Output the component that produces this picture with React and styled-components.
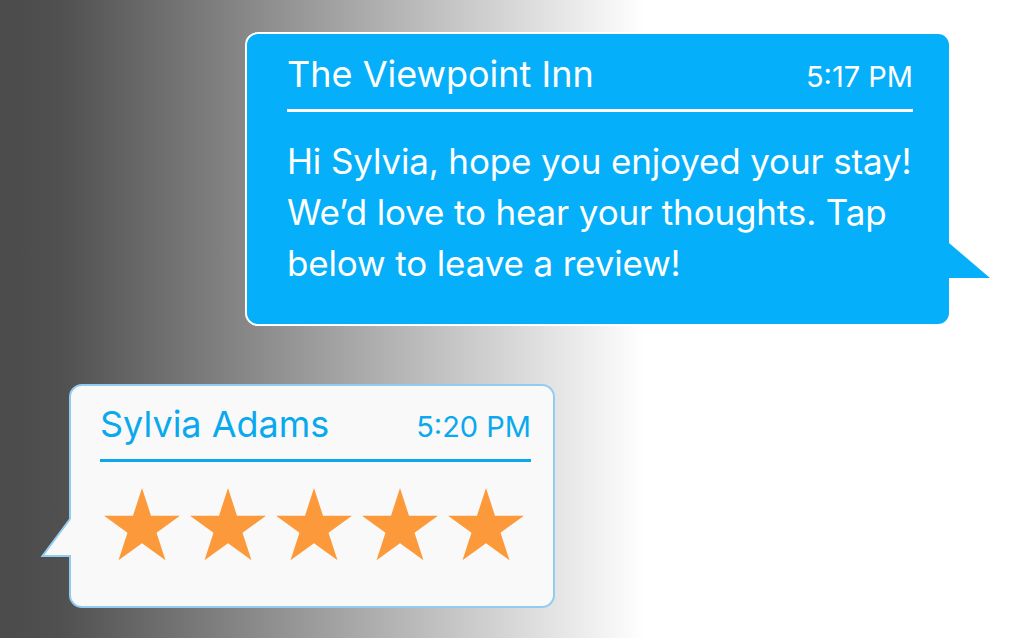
import React from "react";
import styled, { createGlobalStyle } from "styled-components";

const GlobalStyle = createGlobalStyle`
  html, body {
    margin: 0;
    padding: 0;
  }
  body {
    font-family: Inter, "Noto Sans", sans-serif;
    -webkit-font-smoothing: antialiased;
  }
  * { box-sizing: border-box; }
`;

const Page = styled.div`
  width: 1024px;
  height: 638px;
  overflow: hidden;
  background: linear-gradient(90deg, #4b4b4b 0%, #505050 6%, #ffffff 63%);
  display: flex;
  flex-direction: column;
  align-items: flex-start;
  padding-top: 32px;
  gap: 58px;
`;

const Bubble = styled.div`
  position: relative;
  width: ${(p) => p.$width}px;
  margin-left: ${(p) => p.$left}px;
  border: 2px solid ${(p) => p.$border};
  border-radius: 13px;
  background: ${(p) => p.$bg};
  padding: ${(p) => p.$padding};
  color: ${(p) => p.$fg};
`;

const Header = styled.div`
  display: flex;
  justify-content: space-between;
  align-items: baseline;
  padding-bottom: 12px;
  border-bottom: 3px solid ${(p) => p.$line};
`;

const Title = styled.span`
  font-size: 36px;
  line-height: 40px;
  font-weight: 400;
  letter-spacing: 0;
`;

const Time = styled.span`
  font-size: 29px;
  line-height: 40px;
  font-weight: 400;
  letter-spacing: 0;
`;

const Body = styled.p`
  margin: 24px 0 0;
  font-size: 35px;
  line-height: 51px;
  font-weight: 400;
  letter-spacing: -0.15px;
`;

const Stars = styled.div`
  display: flex;
  gap: 10px;
  margin-top: 26px;
  padding-left: 4px;
`;

const Tail = styled.svg`
  position: absolute;
  overflow: visible;
`;

const RightTail = styled(Tail)`
  left: calc(100% - 2px);
  top: 209px;
`;

const LeftTail = styled(Tail)`
  left: -30px;
  top: 133px;
`;

const Star = () => {
  const R = 40;
  const r = R * 0.382;
  const cx = 38;
  const cy = 40;
  const pts = [];
  for (let i = 0; i < 10; i++) {
    const rad = i % 2 === 0 ? R : r;
    const a = (Math.PI / 5) * i - Math.PI / 2;
    pts.push(`${(cx + rad * Math.cos(a)).toFixed(2)},${(cy + rad * Math.sin(a)).toFixed(2)}`);
  }
  return (
    <svg width="76" height="73" viewBox="0 0 76 73">
      <polygon points={pts.join(" ")} fill="#fc9a3b" />
    </svg>
  );
};

export default function App() {
  return (
    <>
      <GlobalStyle />
      <Page>
        <Bubble
          $width={706}
          $left={245}
          $border="#ffffff"
          $bg="#06aff9"
          $fg="#ffffff"
          $padding="20px 36px 35px 40px"
        >
          <Header $line="#ffffff">
            <Title>The Viewpoint Inn</Title>
            <Time>5:17 PM</Time>
          </Header>
          <Body>
            Hi Sylvia, hope you enjoyed your stay!
            <br />
            We’d love to hear your thoughts. Tap
            <br />
            below to leave a review!
          </Body>
          <RightTail width="44" height="36" viewBox="0 0 44 36">
            <polygon points="0,0 2,0 43,35 0,35" fill="#06aff9" />
          </RightTail>
        </Bubble>

        <Bubble
          $width={486}
          $left={69}
          $border="#92cdf0"
          $bg="#f9f9f9"
          $fg="#0aa9ee"
          $padding="18px 22px 45px 29px"
        >
          <Header $line="#0aa9ee">
            <Title>Sylvia Adams</Title>
            <Time>5:20 PM</Time>
          </Header>
          <Stars>
            {[0, 1, 2, 3, 4].map((i) => (
              <Star key={i} />
            ))}
          </Stars>
          <LeftTail width="32" height="40" viewBox="0 0 32 40">
            <polygon points="29,0 32,0 32,37 1,37" fill="#f9f9f9" />
            <path d="M29,0 L1.5,37 L30,37" fill="none" stroke="#92cdf0" strokeWidth="2" />
          </LeftTail>
        </Bubble>
      </Page>
    </>
  );
}
